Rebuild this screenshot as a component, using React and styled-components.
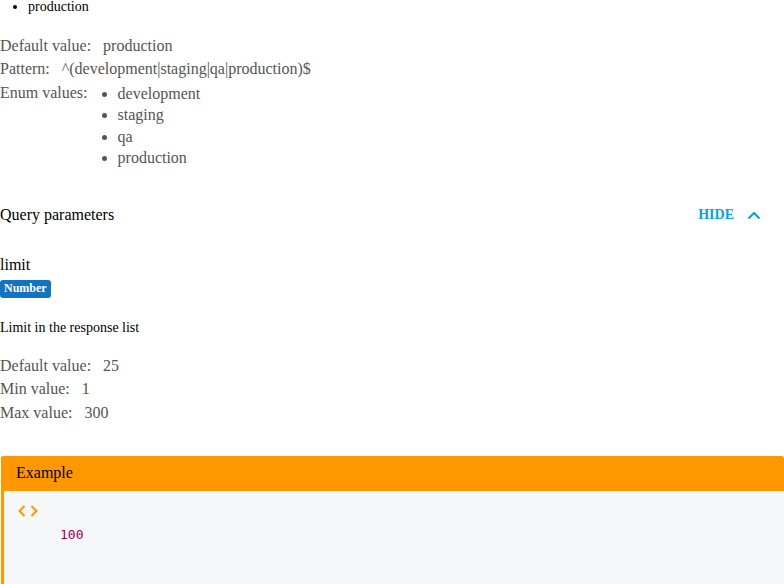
import React from "react";
import styled, { createGlobalStyle } from "styled-components";

const GlobalStyle = createGlobalStyle`
  html, body {
    margin: 0;
    padding: 0;
    background: #fff;
  }
`;

const Page = styled.div`
  width: 784px;
  height: 584px;
  overflow: hidden;
  font-family: "Liberation Serif", "Times New Roman", serif;
  color: #000;
`;

const TopList = styled.ul`
  margin: 0;
  padding: 0 0 0 28px;
  font-size: 14px;
  line-height: 13px;
`;

const Rows = styled.div`
  margin-top: ${(p) => p.$top}px;
  color: #555;
  font-size: 16px;
  line-height: 23.3px;
`;

const Row = styled.div`
  display: flex;
  align-items: flex-start;
`;

const Label = styled.span`
  margin-right: 12px;
`;

const EnumList = styled.ul`
  margin: 2px 0 0;
  padding: 0 0 0 18px;
  line-height: 21.5px;
`;

const SectionHead = styled.div`
  margin-top: 34px;
  height: 24px;
  display: flex;
  align-items: center;
  justify-content: space-between;
  font-size: 16px;
`;

const Toggle = styled.div`
  display: flex;
  align-items: center;
  gap: 12px;
  padding-right: 22px;
  color: #00a5e5;
  font-size: 14px;
  font-weight: 700;
`;

const ParamName = styled.div`
  margin-top: 28px;
  font-size: 16px;
  line-height: 20px;
`;

const Badge = styled.span`
  display: inline-block;
  margin: 5px 0 0;
  padding: 0 4px;
  height: 18px;
  line-height: 17px;
  border-radius: 3px;
  background: #1473c0;
  color: #fff;
  font-size: 12px;
  font-weight: 700;
  vertical-align: top;
`;

const Description = styled.p`
  margin: 20px 0 0;
  font-size: 14px;
  line-height: 20px;
`;

const Example = styled.section`
  margin: 31.5px 0 0 1px;
  border-left: 3px solid #ff9800;
  border-radius: 3px 3px 0 0;
`;

const ExampleHead = styled.div`
  margin-left: -3px;
  height: 35px;
  padding-left: 15px;
  display: flex;
  align-items: center;
  background: #ff9800;
  border-radius: 3px 3px 0 0;
  font-size: 16px;
`;

const ExampleBody = styled.div`
  height: 93px;
  padding: 13px 0 0 14px;
  background: #f5f7f9;
`;

const CodeIcon = styled.svg`
  display: block;
  width: 22px;
  height: 14px;
  fill: none;
  stroke: #ff9800;
  stroke-width: 2;
`;

const Code = styled.pre`
  margin: 7px 0 0 42px;
  font-family: "DejaVu Sans Mono", monospace;
  font-size: 13px;
  font-weight: 500;
  line-height: 20px;
  color: #990055;
`;

const App = () => {
  return (
    <Page>
      <GlobalStyle />
      <TopList>
        <li>production</li>
      </TopList>

      <Rows $top={21}>
        <Row>
          <Label>Default value:</Label>production
        </Row>
        <Row>
          <Label>Pattern:</Label>^(development|staging|qa|production)$
        </Row>
        <Row>
          <Label>Enum values:</Label>
          <EnumList>
            <li>development</li>
            <li>staging</li>
            <li>qa</li>
            <li>production</li>
          </EnumList>
        </Row>
      </Rows>

      <SectionHead>
        <span>Query parameters</span>
        <Toggle>
          HIDE
          <svg width="16" height="10" viewBox="0 0 16 10" fill="none" stroke="#00a5e5" strokeWidth="2">
            <path d="M2.5 8.5 L8 3 L13.5 8.5" />
          </svg>
        </Toggle>
      </SectionHead>

      <ParamName>limit</ParamName>
      <Badge>Number</Badge>
      <Description>Limit in the response list</Description>

      <Rows $top={16.6}>
        <Row>
          <Label>Default value:</Label>25
        </Row>
        <Row>
          <Label>Min value:</Label>1
        </Row>
        <Row>
          <Label>Max value:</Label>300
        </Row>
      </Rows>

      <Example>
        <ExampleHead>Example</ExampleHead>
        <ExampleBody>
          <CodeIcon viewBox="0 0 22 14">
            <path d="M6.5 2 L1.5 7 L6.5 12" />
            <path d="M13.5 2 L18.5 7 L13.5 12" />
          </CodeIcon>
          <Code>100</Code>
        </ExampleBody>
      </Example>
    </Page>
  );
};

export default App;
